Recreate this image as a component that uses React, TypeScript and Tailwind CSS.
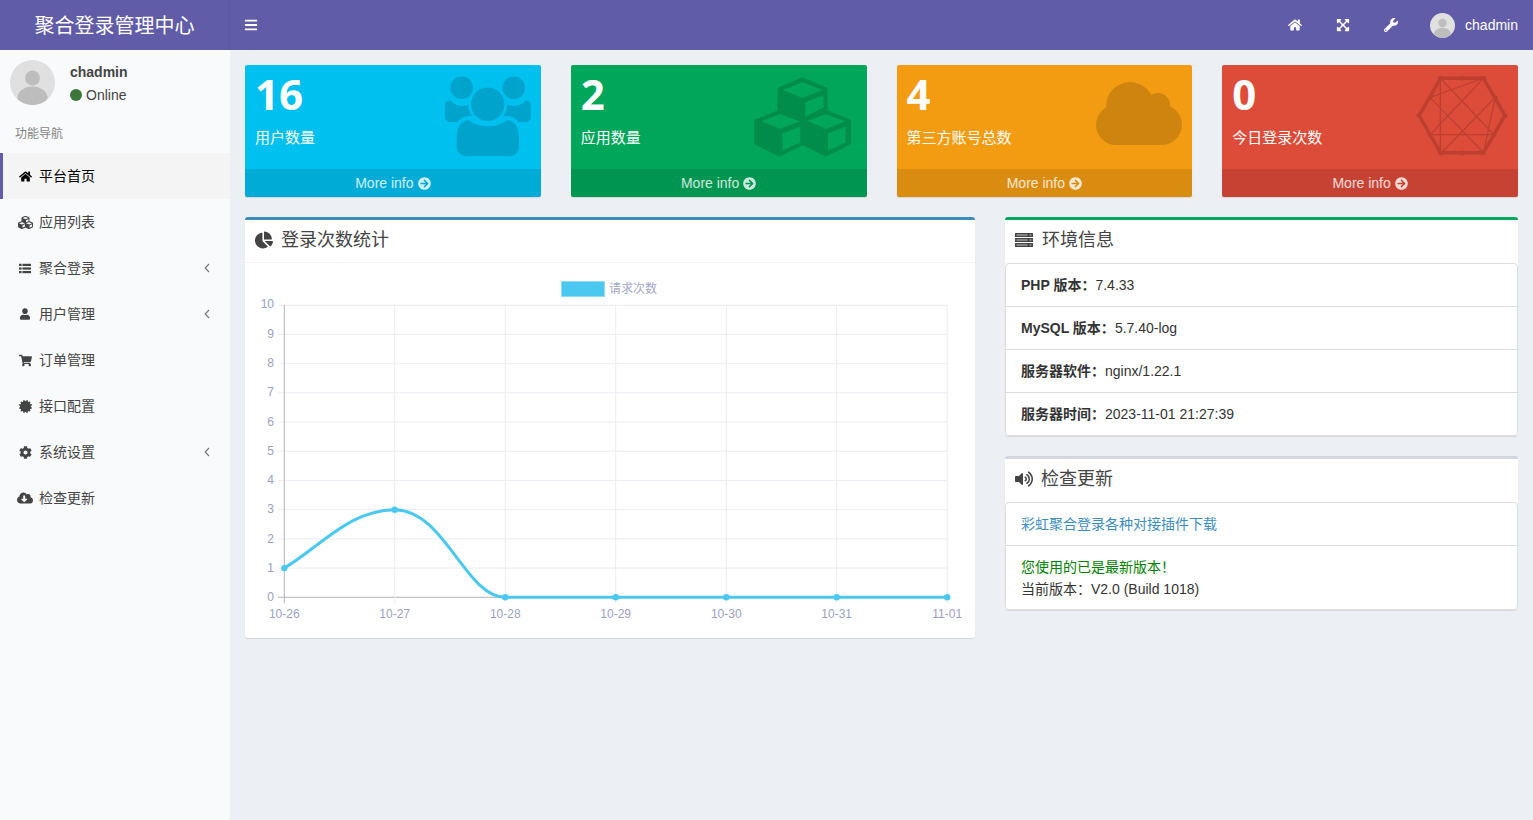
import type { ReactNode } from "react";
import {
  FaArrowCircleRight,
  FaBars,
  FaChartPie,
  FaCertificate,
  FaCloudDownloadAlt,
  FaCog,
  FaConnectdevelop,
  FaCubes,
  FaExpandArrowsAlt,
  FaHome,
  FaShoppingCart,
  FaUser,
  FaVolumeUp,
  FaWrench,
} from "react-icons/fa";

function Avatar({ className }: { className: string }) {
  return (
    <svg viewBox="0 0 45 45" className={className}>
      <clipPath id="avatar-clip">
        <circle cx="22.5" cy="22.5" r="22.5" />
      </clipPath>
      <g clipPath="url(#avatar-clip)">
        <rect width="45" height="45" fill="#e0e0e0" />
        <circle cx="22.5" cy="18" r="7.5" fill="#bdbdbd" />
        <ellipse cx="22.5" cy="38" rx="15" ry="11.5" fill="#bdbdbd" />
      </g>
    </svg>
  );
}

function UsersIcon() {
  return (
    <svg viewBox="0 0 86 81" className="w-[86px] h-[81px]">
      <mask id="users-mask">
        <rect width="86" height="81" fill="white" />
        <circle cx="42.7" cy="28.3" r="19.5" fill="black" />
        <path d="M8 62C8 50 14 40 24 40H62C72 40 78 50 78 62V84H8Z" fill="black" />
      </mask>
      <g fill="black" fillOpacity="0.15">
        <g mask="url(#users-mask)">
          <circle cx="16.7" cy="11.7" r="11.3" />
          <circle cx="68.7" cy="11.7" r="11.3" />
          <path d="M5 24C8 28 13 30 17 30C21 30 24 28 30 24V46H6C2 46 0 44 0 40V30C0 27 2 24 5 24Z" />
          <path d="M81 24C78 28 73 30 69 30C65 30 62 28 56 24V46H80C84 46 86 44 86 40V30C86 27 84 24 81 24Z" />
        </g>
        <circle cx="42.7" cy="28.3" r="16.7" />
        <path d="M11.7 62C11.7 52 16 44 24 44C28 48 35 50 43 50C51 50 58 48 62 44C70 44 74 52 74 62V70C74 76 70 80 64 80H22C16 80 11.7 76 11.7 70Z" />
      </g>
    </svg>
  );
}

function CubesIcon() {
  return (
    <svg viewBox="552 50 290 238" className="w-[97px] h-[80px]">
      <mask id="cubes-mask">
        <path d="M697 50L772 82V160L697 196L622 160V82Z" fill="white" />
        <path d="M628 147l75 31v72l-75 38l-76 -38v-72z" fill="white" />
        <path d="M767 147l75 31v72l-75 38l-76 -38v-72z" fill="white" />
        <g fill="black">
          <path d="M638 88L697 65L757 88L697 112Z" />
          <path d="M705 125L760 104V140L705 168Z" />
          <path d="M575 181L630 160L688 182L630 205Z" />
          <path d="M637 218L690 198V245L637 270Z" />
          <path d="M712 181L767 160L824 182L767 205Z" />
          <path d="M773 218L826 198V245L773 270Z" />
        </g>
      </mask>
      <rect x="552" y="50" width="290" height="238" fill="black" fillOpacity="0.15" mask="url(#cubes-mask)" />
    </svg>
  );
}

function CloudIcon() {
  return (
    <svg viewBox="605 67 257 188" className="w-[86px] h-[63px]">
      <g opacity="0.15">
        <circle cx="707" cy="139" r="72" />
        <circle cx="791" cy="135" r="35" />
        <circle cx="665" cy="195" r="60" />
        <circle cx="802" cy="195" r="60" />
        <rect x="665" y="150" width="137" height="105" />
      </g>
    </svg>
  );
}

function ListIcon() {
  return (
    <svg viewBox="0 0 14 11" className="w-[14px] h-[11px]" fill="currentColor">
      <rect x="0" y="0" width="3" height="2.6" />
      <rect x="4" y="0" width="10" height="2.6" />
      <rect x="0" y="4.2" width="3" height="2.6" />
      <rect x="4" y="4.2" width="10" height="2.6" />
      <rect x="0" y="8.4" width="3" height="2.6" />
      <rect x="4" y="8.4" width="10" height="2.6" />
    </svg>
  );
}

function ServerIcon() {
  return (
    <svg viewBox="0 0 18 14" className="w-[18px] h-[14px] mr-[9px]">
      {[0, 5, 10].map((y) => (
        <g key={y}>
          <rect x="0" y={y} width="18" height="4" rx="0.5" fill="#444" />
          <rect x="1.5" y={y + 1.5} width="11" height="1" fill="#c8c8c8" />
          <rect x="14.5" y={y + 1.5} width="2" height="1" fill="#c8c8c8" />
        </g>
      ))}
    </svg>
  );
}

function AngleLeft() {
  return (
    <svg viewBox="0 0 6 10" className="ml-auto w-[6px] h-[10px]">
      <path d="M5 1L1.2 5L5 9" fill="none" stroke="#777" strokeWidth="1.2" />
    </svg>
  );
}

const boxes = [
  { n: "16", label: "用户数量", bg: "bg-[#00c0ef]", icon: <UsersIcon />, pos: "top-[11px] right-[10px]" },
  { n: "2", label: "应用数量", bg: "bg-[#00a65a]", icon: <CubesIcon />, pos: "top-[12px] right-[16px]" },
  { n: "4", label: "第三方账号总数", bg: "bg-[#f39c12]", icon: <CloudIcon />, pos: "top-[17px] right-[10px]" },
  { n: "0", label: "今日登录次数", bg: "bg-[#dd4b39]", icon: <FaConnectdevelop className="w-[96px] h-[85px] text-black/15" />, pos: "top-[8px] right-[8px]" },
];

const menu: { label: string; icon: ReactNode; arrow?: boolean; active?: boolean }[] = [
  { label: "平台首页", icon: <FaHome className="w-[13px] h-[13px] shrink-0" />, active: true },
  { label: "应用列表", icon: <FaCubes className="w-[17px] h-[15px] shrink-0" /> },
  { label: "聚合登录", icon: <ListIcon />, arrow: true },
  { label: "用户管理", icon: <FaUser className="w-[10px] h-[12px] shrink-0" />, arrow: true },
  { label: "订单管理", icon: <FaShoppingCart className="w-[13px] h-[13px] shrink-0" /> },
  { label: "接口配置", icon: <FaCertificate className="w-[13px] h-[13px] shrink-0" /> },
  { label: "系统设置", icon: <FaCog className="w-[13px] h-[13px] shrink-0" />, arrow: true },
  { label: "检查更新", icon: <FaCloudDownloadAlt className="w-[16px] h-[14px] shrink-0" /> },
];

const env = [
  ["PHP 版本：", "7.4.33"],
  ["MySQL 版本：", "5.7.40-log"],
  ["服务器软件：", "nginx/1.22.1"],
  ["服务器时间：", "2023-11-01 21:27:39"],
];

const xs = [284.3, 394.7, 505.3, 615.7, 726.3, 836.7, 947.2];
const xLabels = ["10-26", "10-27", "10-28", "10-29", "10-30", "10-31", "11-01"];
const yAt = (v: number) => 597.3 - v * 29.2;

function Chart() {
  return (
    <svg viewBox="245 263 730 375" className="block w-[730px] h-[375px]">
      <rect x="561.5" y="281.5" width="43" height="15" fill="#4bc8f0" stroke="#8fdcf5" />
      <text x="609" y="293" fontSize="12" fill="#a2a7c9">请求次数</text>
      {Array.from({ length: 11 }, (_, v) => (
        <g key={v}>
          <line x1="278" x2="947.5" y1={yAt(v)} y2={yAt(v)} stroke={v === 0 ? "#b3b3b8" : "#ececf2"} />
          <text x="274" y={601.3 - v * 29.3} fontSize="12" textAnchor="end" fill="#9aa0c4">{v}</text>
        </g>
      ))}
      {xs.map((x, i) => (
        <g key={x}>
          <line x1={x} x2={x} y1="305" y2="603" stroke={i === 0 ? "#b3b3b8" : "#ececf2"} />
          <text x={x} y="618" fontSize="12" textAnchor="middle" fill="#9aa0c4">{xLabels[i]}</text>
        </g>
      ))}
      <path
        d="M284.3 568.1C322 545 350 510 394.7 509.7C445 510 465 597 505.3 597.3L947.2 597.3"
        fill="none"
        stroke="#4bc8f0"
        strokeWidth="3"
      />
      {[1, 3, 0, 0, 0, 0, 0].map((v, i) => (
        <circle key={i} cx={xs[i]} cy={yAt(v)} r="3.2" fill="#4bc8f0" />
      ))}
    </svg>
  );
}

function Box({ border, head, icon, title, children }: { border: string; head: string; icon: ReactNode; title: string; children: ReactNode }) {
  return (
    <div className={"bg-white rounded-[3px] border-t-[3px] shadow-[0_1px_1px_rgba(0,0,0,0.1)] " + border}>
      <div className={"flex items-center pl-[10px] text-[#444] " + head}>
        {icon}
        <h3 className="text-[18px] leading-none">{title}</h3>
      </div>
      {children}
    </div>
  );
}

export default function App() {
  return (
    <div className="h-screen flex flex-col overflow-hidden bg-[#ecf0f5] font-['Liberation_Sans','Noto_Sans_CJK_SC',sans-serif] text-[14px] text-[#333]">
      <header className="h-[50px] shrink-0 flex bg-[#605ca8] text-white">
        <div className="w-[230px] flex items-center justify-center pt-px text-[20px] border-r border-[#5b57a1]">聚合登录管理中心</div>
        <div className="flex items-center pl-[14px]">
          <FaBars className="w-[14px] h-[14px]" />
        </div>
        <div className="ml-auto flex items-center pr-[15px]">
          <FaHome className="w-[14px] h-[14px]" />
          <FaExpandArrowsAlt className="w-[14px] h-[14px] ml-[34px]" />
          <FaWrench className="w-[14px] h-[14px] ml-[34px]" />
          <Avatar className="w-[25px] h-[25px] ml-[32px]" />
          <span className="ml-[10px]">chadmin</span>
        </div>
      </header>
      <div className="flex-1 flex min-h-0">
        <aside className="w-[230px] shrink-0 bg-[#f9fafc]">
          <div className="h-[65px] flex pl-[10px] pt-[10px]">
            <Avatar className="w-[45px] h-[45px]" />
            <div className="ml-[15px] text-[#444]">
              <p className="font-bold leading-[16px] mt-[4px]">chadmin</p>
              <p className="flex items-center mt-[5px] leading-[20px]">
                <span className="w-3 h-3 rounded-full bg-[#3c763d] mr-1" />
                Online
              </p>
            </div>
          </div>
          <div className="h-[38px] pl-[15px] pt-[10px] text-[12px] leading-[18px] text-[#848484]">功能导航</div>
          <nav>
            {menu.map((m) => (
              <div
                key={m.label}
                className={
                  "h-[46px] flex items-center border-l-[3px] pr-[20px] " +
                  (m.active ? "border-[#605ca8] bg-[#f4f4f5] text-black" : "border-transparent text-[#444]")
                }
              >
                <span className="w-[36px] flex justify-center shrink-0 pl-[16px] pr-[8px]">{m.icon}</span>
                <span>{m.label}</span>
                {m.arrow && <AngleLeft />}
              </div>
            ))}
          </nav>
        </aside>
        <main className="flex-1 p-[15px] min-w-0">
          <div className="grid grid-cols-4 gap-[30px]">
            {boxes.map((b) => (
              <div key={b.label} className={"relative rounded-[2px] text-white overflow-hidden shadow-[0_1px_1px_rgba(0,0,0,0.1)] " + b.bg}>
                <div className="h-[104px] p-[10px]">
                  <h3 className="font-['Open_Sans',sans-serif] text-[42px] font-bold leading-[42px] -mt-[2px]">{b.n}</h3>
                  <p className="text-[15px] leading-[20px] mt-[13px]">{b.label}</p>
                </div>
                <div className={"absolute " + b.pos}>{b.icon}</div>
                <div className="h-[28px] flex items-center justify-center gap-[4px] bg-black/10 text-white/80">
                  More info
                  <FaArrowCircleRight className="w-[13px] h-[13px]" />
                </div>
              </div>
            ))}
          </div>
          <div className="grid grid-cols-[730px_513px] gap-[30px] mt-[20px] items-start">
            <Box border="border-[#3c8dbc]" head="h-[42px] pb-[2px]" title="登录次数统计" icon={<FaChartPie className="w-[18px] h-[18px] mr-[8px]" />}>
              <div className="border-t border-[#f4f4f4]">
                <Chart />
              </div>
            </Box>
            <div className="flex flex-col gap-[20px]">
              <Box border="border-[#00a65a]" head="h-[43px] pb-[3px]" title="环境信息" icon={<ServerIcon />}>
                <ul className="border border-[#ddd] rounded-[4px]">
                  {env.map(([k, v]) => (
                    <li key={k} className="h-[43px] flex items-center pl-[15px] border-b border-[#ddd] last:border-b-0 last:h-[42px]">
                      <b className="font-bold">{k}</b>
                      <span>{v}</span>
                    </li>
                  ))}
                </ul>
              </Box>
              <Box border="border-[#d2d6de]" head="h-[43px] pb-[3px]" title="检查更新" icon={<FaVolumeUp className="w-[18px] h-[16px] mr-[8px]" />}>
                <ul className="border border-[#ddd] rounded-[4px]">
                  <li className="h-[43px] flex items-center pl-[15px] border-b border-[#ddd] text-[#3c8dbc]">彩虹聚合登录各种对接插件下载</li>
                  <li className="h-[63px] pl-[15px] pt-[10px] leading-[22px]">
                    <p className="text-[#008000]">您使用的已是最新版本！</p>
                    <p>当前版本：V2.0 (Build 1018)</p>
                  </li>
                </ul>
              </Box>
            </div>
          </div>
        </main>
      </div>
    </div>
  );
}
